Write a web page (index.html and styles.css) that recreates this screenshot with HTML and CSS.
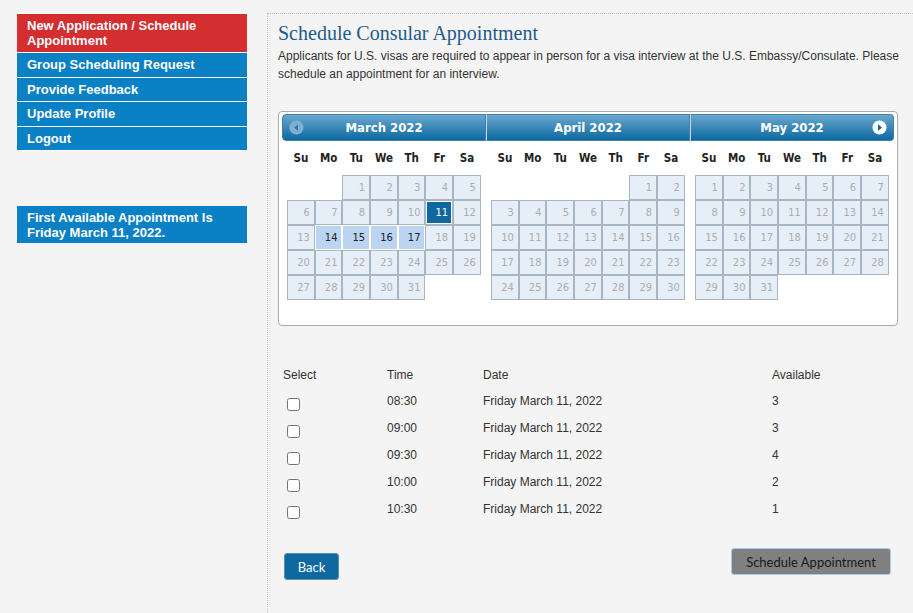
FILE: index.html
```html
<!DOCTYPE html>
<html lang="en">
<head>
<meta charset="UTF-8">
<meta name="viewport" content="width=device-width, initial-scale=1.0">
<title>Schedule Consular Appointment</title>
<link rel="stylesheet" href="styles.css">
</head>
<body>

<div class="page">

  <!-- Left menu -->
  <aside class="sidebar">
    <nav class="menu">
      <a href="#" class="menu-item active">New Application / Schedule Appointment</a>
      <a href="#" class="menu-item">Group Scheduling Request</a>
      <a href="#" class="menu-item">Provide Feedback</a>
      <a href="#" class="menu-item">Update Profile</a>
      <a href="#" class="menu-item">Logout</a>
    </nav>
    <div class="first-available">First Available Appointment Is Friday March 11, 2022.</div>
  </aside>

  <!-- Main content -->
  <main class="content">
    <h1 class="page-title">Schedule Consular Appointment</h1>
    <p class="intro">Applicants for U.S. visas are required to appear in person for a visa interview at the U.S. Embassy/Consulate. Please schedule an appointment for an interview.</p>

    <div class="datepicker">
      <div class="dp-group">
        <div class="dp-header dp-first">
          <span class="dp-prev"><svg viewBox="0 0 16 16" width="15" height="15"><circle cx="8" cy="8" r="7.5" fill="#7fb0d4"/><path d="M9.6 4.4 L5.4 8 L9.6 11.6 Z" fill="#3277aa"/></svg></span>
          March 2022
        </div>
        <table class="dp-calendar">
          <thead><tr><th>Su</th><th>Mo</th><th>Tu</th><th>We</th><th>Th</th><th>Fr</th><th>Sa</th></tr></thead>
          <tbody data-start="2" data-days="31" data-current="11" data-open="14,15,16,17"></tbody>
        </table>
      </div>
      <div class="dp-group">
        <div class="dp-header">April 2022</div>
        <table class="dp-calendar">
          <thead><tr><th>Su</th><th>Mo</th><th>Tu</th><th>We</th><th>Th</th><th>Fr</th><th>Sa</th></tr></thead>
          <tbody data-start="5" data-days="30"></tbody>
        </table>
      </div>
      <div class="dp-group">
        <div class="dp-header dp-last">
          May 2022
          <span class="dp-next"><svg viewBox="0 0 16 16" width="15" height="15"><circle cx="8" cy="8" r="7.5" fill="#fff"/><path d="M6.4 4.4 L10.6 8 L6.4 11.6 Z" fill="#0e68a0"/></svg></span>
        </div>
        <table class="dp-calendar">
          <thead><tr><th>Su</th><th>Mo</th><th>Tu</th><th>We</th><th>Th</th><th>Fr</th><th>Sa</th></tr></thead>
          <tbody data-start="0" data-days="31"></tbody>
        </table>
      </div>
    </div>

    <table class="slots">
      <thead>
        <tr>
          <th class="col-select">Select</th>
          <th class="col-time">Time</th>
          <th class="col-date">Date</th>
          <th>Available</th>
        </tr>
      </thead>
      <tbody>
        <tr><td class="pick"><input type="checkbox"></td><td>08:30</td><td>Friday March 11, 2022</td><td>3</td></tr>
        <tr><td class="pick"><input type="checkbox"></td><td>09:00</td><td>Friday March 11, 2022</td><td>3</td></tr>
        <tr><td class="pick"><input type="checkbox"></td><td>09:30</td><td>Friday March 11, 2022</td><td>4</td></tr>
        <tr><td class="pick"><input type="checkbox"></td><td>10:00</td><td>Friday March 11, 2022</td><td>2</td></tr>
        <tr><td class="pick"><input type="checkbox"></td><td>10:30</td><td>Friday March 11, 2022</td><td>1</td></tr>
      </tbody>
    </table>

    <div class="actions">
      <button type="button" class="btn-back">Back</button>
      <button type="button" class="btn-schedule">Schedule Appointment</button>
    </div>
  </main>

</div>

<script>
// Fill each month table with its days
var bodies = document.querySelectorAll(".dp-calendar tbody");

for (var b = 0; b < bodies.length; b++) {
  var body = bodies[b];
  var start = parseInt(body.getAttribute("data-start"), 10);
  var days = parseInt(body.getAttribute("data-days"), 10);
  var current = parseInt(body.getAttribute("data-current") || "0", 10);
  var open = (body.getAttribute("data-open") || "").split(",");
  var total = Math.ceil((start + days) / 7) * 7;
  var row;

  for (var i = 0; i < total; i++) {
    if (i % 7 == 0) {
      row = document.createElement("tr");
      body.appendChild(row);
    }
    var cell = document.createElement("td");
    var day = i - start + 1;
    if (day >= 1 && day <= days) {
      var span = document.createElement("span");
      span.className = "day";
      if (day == current) span.className += " current";
      if (open.indexOf(String(day)) > -1) span.className += " open";
      span.textContent = day;
      cell.appendChild(span);
    }
    row.appendChild(cell);
  }
}
</script>

</body>
</html>
```

FILE: styles.css
```css
/* Page */
body {
  margin: 0;
  background-color: #f4f4f4;
  font-family: "Liberation Sans", Arial, sans-serif;
  color: #333;
}

.page {
  display: flex;
  min-height: 100vh;
}

/* Sidebar */
.sidebar {
  flex: none;
  width: 230px;
  margin: 13px 20px 0 17px;
}

.menu {
  border-top: 1px solid #fff;
}

.menu-item {
  display: block;
  padding: 4px 10px 4.5px;
  background-color: #0a80c5;
  border-bottom: 1px solid #fff;
  color: #fff;
  font-size: 13px;
  font-weight: bold;
  line-height: 15px;
  text-decoration: none;
}

.menu-item.active {
  background-color: #d42e31;
  padding-bottom: 4px;
}

.first-available {
  margin-top: 55px;
  padding: 4px 10px 3px;
  background-color: #0a80c5;
  color: #fff;
  font-size: 13px;
  font-weight: bold;
  line-height: 15px;
}

/* Main content */
.content {
  flex: 1;
  margin-top: 13px;
  padding: 0 8px 0 10px;
  border-top: 1px dotted #c4c4c4;
  border-left: 1px dotted #c4c4c4;
}

.page-title {
  margin: 7px 0 2px;
  font-family: "Liberation Serif", "Times New Roman", serif;
  font-size: 20px;
  font-weight: normal;
  line-height: 24px;
  color: #1f5b8c;
}

.intro {
  margin: 0;
  font-size: 12px;
  line-height: 18px;
}

/* Datepicker */
.datepicker {
  display: flex;
  box-sizing: border-box;
  width: 620px;
  margin-top: 28px;
  padding: 2px 3px 25px;
  background-color: #fff;
  border: 1px solid #aaa;
  border-radius: 4px;
  font-family: "DejaVu Sans Condensed", "DejaVu Sans", Verdana, sans-serif;
}

.dp-group {
  flex: 1;
}

.dp-header {
  position: relative;
  box-sizing: border-box;
  height: 27px;
  background: linear-gradient(#6aa7d0, #0c69a0);
  border: 1px solid #3f80ad;
  border-left-color: #d4d4d4;
  color: #fff;
  font-size: 13px;
  font-weight: bold;
  line-height: 25px;
  text-align: center;
}

.dp-first {
  border-left-color: #3f80ad;
  border-radius: 4px 0 0 4px;
}

.dp-last {
  border-radius: 0 4px 4px 0;
}

.dp-prev,
.dp-next {
  position: absolute;
  top: 5px;
  width: 15px;
  height: 15px;
  line-height: 0;
}

.dp-prev {
  left: 6px;
}

.dp-next {
  right: 6px;
}

.dp-calendar {
  width: 95%;
  margin: 0 auto;
  border-collapse: separate;
  border-spacing: 0;
}

.dp-calendar th {
  height: 34px;
  padding: 0;
  color: #222;
  font-size: 11.5px;
  font-weight: bold;
}

.dp-calendar td {
  padding: 0;
}

.day {
  display: block;
  box-sizing: border-box;
  height: 25px;
  padding-right: 4px;
  background-color: #e6eef8;
  border: 1px solid #a7b6c0;
  color: #adadad;
  font-size: 11px;
  line-height: 23px;
  text-align: right;
}

.day.open {
  background-color: #bad4f1;
  border-color: #fff;
  color: #222;
}

.day.current {
  background-color: #0f68a0;
  box-shadow: inset 0 0 0 1px #fff;
  color: #fff;
}

/* Time slots */
.slots {
  width: 100%;
  margin-top: 36px;
  border-collapse: collapse;
  font-size: 12px;
}

.slots th,
.slots td {
  padding: 6px 0 0 5px;
  font-weight: normal;
  line-height: 14px;
  text-align: left;
  vertical-align: top;
}

.slots thead tr {
  height: 26px;
}

.slots tbody tr {
  height: 27px;
}

.col-select {
  width: 99px;
}

.col-time {
  width: 91px;
}

.col-date {
  width: 284px;
}

.slots td.pick {
  padding-top: 7px;
}

.pick input {
  display: block;
  width: 13px;
  height: 13px;
  margin: 3px 3px 3px 4px;
}

/* Buttons */
.actions {
  display: flex;
  justify-content: space-between;
  align-items: flex-start;
  margin-top: 25px;
  padding: 0 14px 0 6px;
}

.btn-back {
  width: 55px;
  height: 27px;
  margin-top: 5px;
  background-color: #0e69a1;
  border: 1px solid #5d8fb3;
  border-radius: 3px;
  color: #fff;
  font-family: Lato, "Open Sans", sans-serif;
  font-size: 13px;
  cursor: pointer;
}

.btn-schedule {
  width: 160px;
  height: 27px;
  background-color: #808080;
  border: 1px solid #a9cbee;
  border-radius: 3px;
  color: #1a1a1a;
  font-family: Lato, "Open Sans", sans-serif;
  font-size: 13px;
  cursor: pointer;
}
```
